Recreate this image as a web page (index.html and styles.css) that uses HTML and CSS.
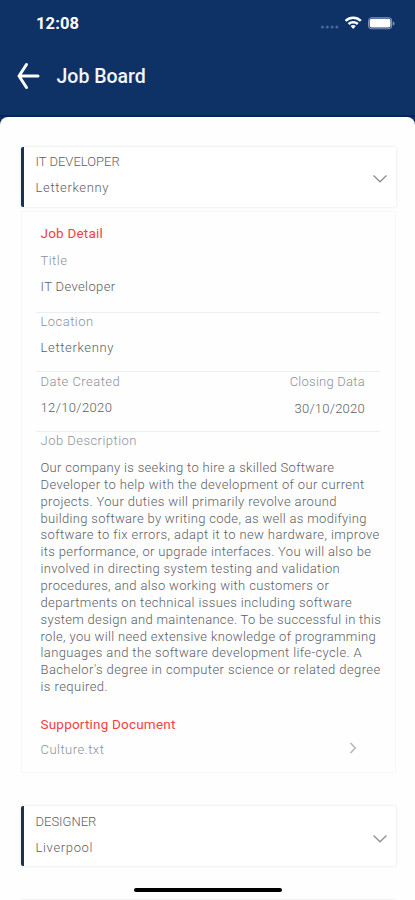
FILE: index.html
```html
<!DOCTYPE html>
<html lang="en">
<head>
<meta charset="utf-8">
<title>Job Board</title>
<link rel="stylesheet" href="styles.css">
</head>
<body>
<header class="header">
  <div class="status">
    <span class="time">12:08</span>
    <svg class="indicators" width="76" height="16" viewBox="0 0 76 16">
      <g fill="#49689a"><circle cx="3.5" cy="12" r="1.5"/><circle cx="8.3" cy="12" r="1.5"/><circle cx="13.1" cy="12" r="1.5"/><circle cx="17.900" cy="12" r="1.5"/></g>
      <g fill="none" stroke="#fff" stroke-width="2.5"><path d="M26.6 5.8a11 11 0 0 1 15.2 0"/><path d="M29.6 9a6.7 6.7 0 0 1 9.2 0"/></g>
      <path d="M31.6 11.1a3.8 3.8 0 0 1 5.2 0L34.2 14z" fill="#fff"/>
      <rect x="49.6" y="2.7" width="23" height="11" rx="3.2" fill="none" stroke="#8195b6" stroke-width="1.1"/>
      <rect x="50.7" y="3.8" width="20.8" height="8.8" rx="2" fill="#fff"/>
      <path d="M73.8 6.4c2.3 0 2.3 4 0 4z" fill="#8195b6"/>
    </svg>
  </div>
  <div class="toolbar">
    <svg class="back" width="24" height="28" viewBox="0 0 24 28" fill="none" stroke="#fff" stroke-width="3" stroke-linecap="round" stroke-linejoin="round"><path d="M10.5 2.5L3 14l7.500 11.500M3 14h19" /></svg>
    <h1 class="title">Job Board</h1>
  </div>
</header>
<main class="sheet">
  <section class="card">
    <div class="card-text"><div class="row caps">IT DEVELOPER</div><div class="row city">Letterkenny</div></div>
    <svg class="chevron" width="16" height="10" viewBox="0 0 16 10"><path d="M1.5 1.5L8 7.8l6.500-6.300"/></svg>
  </section>
  <section class="panel">
    <h2 class="heading detail">Job Detail</h2>
    <div class="field first"><div class="row label">Title</div><div class="row">IT Developer</div></div>
    <div class="field place"><div class="row label">Location</div><div class="row city">Letterkenny</div></div>
    <div class="field dates">
      <div><div class="row label">Date Created</div><div class="row">12/10/2020</div></div>
      <div class="closing"><div class="row label">Closing Data</div><div class="row">30/10/2020</div></div>
    </div>
    <div class="row label desc-label">Job Description</div>
    <p class="description">
      <span class="l1">Our company is seeking to hire a skilled Software</span>
      <span class="l2">Developer to help with the development of our current</span>
      <span class="l3">projects. Your duties will primarily revolve around</span>
      <span class="l4">building software by writing code, as well as modifying</span>
      <span class="l5">software to fix errors, adapt it to new hardware, improve</span>
      <span class="l6">its performance, or upgrade interfaces. You will also be</span>
      <span class="l7">involved in directing system testing and validation</span>
      <span class="l8">procedures, and also working with customers or</span>
      <span class="l9">departments on technical issues including software</span>
      <span class="l10">system design and maintenance. To be successful in this</span>
      <span class="l11">role, you will need extensive knowledge of programming</span>
      <span class="l12">languages and the software development life-cycle. A</span>
      <span class="l13">Bachelor's degree in computer science or related degree</span>
      <span class="l14">is required.</span>
    </p>
    <h2 class="heading support">Supporting Document</h2>
    <div class="document"><span class="row label">Culture.txt</span><svg class="next" width="8" height="12" viewBox="0 0 8 12"><path d="M1.500 1L6.300 6l-4.800 5"/></svg></div>
  </section>
  <section class="card second">
    <div class="card-text"><div class="row caps">DESIGNER</div><div class="row city">Liverpool</div></div>
    <svg class="chevron" width="16" height="10" viewBox="0 0 16 10"><path d="M1.500 1.500L8 7.800l6.500-6.300"/></svg>
  </section>
  <section class="card third"></section>
</main>
<div class="home-indicator"></div>
</body>
</html>
```
FILE: styles.css
```css
* { box-sizing: border-box; }
body {
  margin: 0;
  width: 415px;
  height: 900px;
  overflow: hidden;
  position: relative;
  background: #0e3166;
  color: #5c5f64;
  font: 300 13px/20px Roboto, "Liberation Sans", sans-serif;
}
h1, h2, p { margin: 0; }
.header { height: 117px; border-bottom: 2px solid #06235a; color: #fff; }
.status { height: 46px; padding: 14px 20px 0 36px; display: flex; justify-content: space-between; }
.time { font-size: 16.5px; font-weight: 700; letter-spacing: .1px; }
.indicators { margin-top: 1px; }
.toolbar { display: flex; align-items: center; height: 59px; padding-left: 16px; gap: 16.500px; }
.title { margin-top: 2px; font-size: 19.500px; font-weight: 500; letter-spacing: 0; color: #f4f6fb; }
.sheet { height: 783px; overflow: hidden; background: #fefefe; border-radius: 8px 8px 0 0; padding: 30px 19px 0 21px; }
.card {
  height: 60px;
  display: flex;
  justify-content: space-between;
  padding: 5px 8px 0 11.500px;
  background: #fff;
  border-left: 3px solid #153652;
  border-radius: 2px;
  box-shadow: 0 0 2px 1px #f0f0f0;
}
.row { height: 20px; white-space: nowrap; letter-spacing: .37px; }
.city { letter-spacing: .65px; }
.card-text .row + .row { margin-top: 6px; }
.card-text .caps { letter-spacing: 0; }
.chevron { margin-top: 22px; fill: none; stroke: #929292; stroke-width: 1.4; }
.panel { height: 562px; margin-top: 4px; padding: 11px 14px 0; border: 1px solid #f7f7f7; box-shadow: 0 0 1px #f9f9f9; }
.heading { padding-left: 4.500px; font-size: 13.500px; line-height: 20px; font-weight: 400; letter-spacing: .2px; color: #f63f42; }
.label { color: #8b929c; letter-spacing: .47px; }
.field { padding: 0 0 0 4.500px; margin-right: 1px; border-bottom: 1px solid #eceff1; }
.field .row + .row { margin-top: 6px; }
.first { height: 70px; padding-top: 8px; }
.place { height: 60px; margin-top: -1px; }
.dates { height: 60px; display: flex; justify-content: space-between; padding-right: 15px; }
.closing { text-align: right; }
.closing .row + .row { margin-top: 7px; }
.closing .row { letter-spacing: .25px; }
.desc-label { padding-left: 4.500px; margin-top: -1px; }
.description { padding: 0 0 0 4.500px; margin-top: 9px; line-height: 16.870px; white-space: nowrap; }
.description span { display: block; height: 16.870px; letter-spacing: .35px; }
.description .l1, .description .l4 { letter-spacing: .32px; }
.description .l2, .description .l3, .description .l9, .description .l12 { letter-spacing: .376px; }
.description .l5, .description .l13 { letter-spacing: .405px; }
.description .l10 { letter-spacing: .303px; }
.description .l14 { letter-spacing: .44px; }
.support { margin-top: 18px; }
.document { display: flex; justify-content: space-between; padding: 6px 24px 0 4.500px; }
.next { margin-top: 2px; fill: none; stroke: #b5b5b5; stroke-width: 1.500; }
.second { margin-top: 33px; }
.second .card-text { padding-top: 1px; }
.second .chevron { margin-top: 23px; }
.third { margin-top: 34px; }
.home-indicator { position: absolute; left: 134px; top: 888px; width: 148px; height: 4px; border-radius: 2px; background: #000; }
```
